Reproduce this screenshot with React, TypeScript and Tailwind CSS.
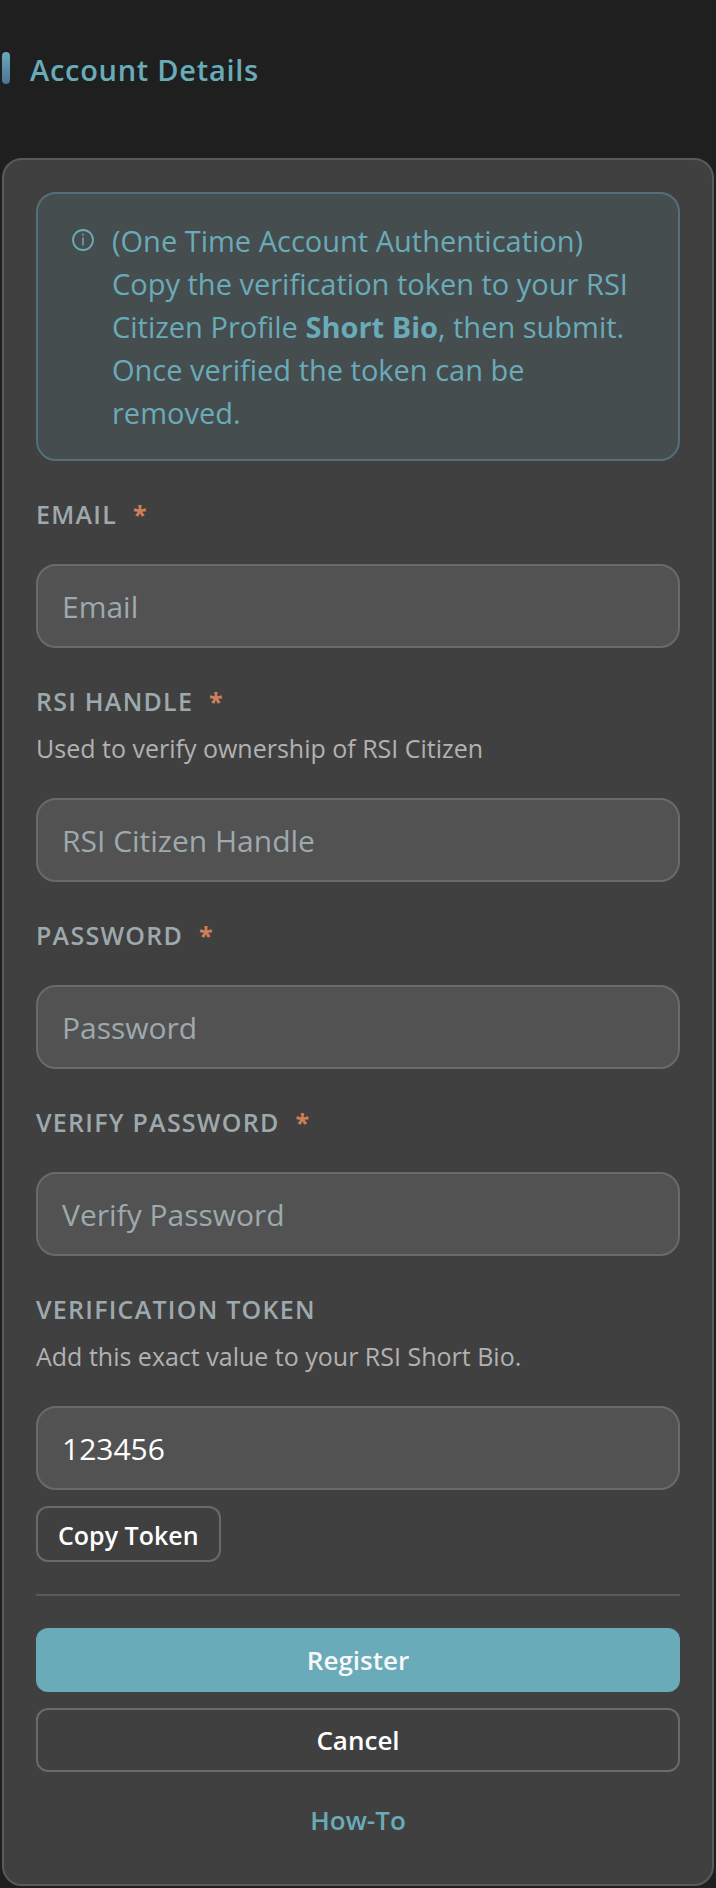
import React, { useState } from "react";

interface FieldProps {
  id: string;
  label: string;
  type?: string;
  placeholder?: string;
  hint?: string;
  required?: boolean;
  value: string;
  readOnly?: boolean;
  onChange?: (value: string) => void;
}

const InfoIcon = () => (
  <svg viewBox="0 0 26 26" className="w-[26px] h-[26px] shrink-0" fill="none" stroke="currentColor" aria-hidden="true">
    <circle cx="13" cy="12" r="10" strokeWidth="1.8" />
    <path d="M13 9.5v8" strokeWidth="1.5" />
    <path d="M13 5.8v1.8" strokeWidth="1.6" />
  </svg>
);

const Field: React.FC<FieldProps> = ({
  id,
  label,
  type = "text",
  placeholder,
  hint,
  required,
  value,
  readOnly,
  onChange,
}) => (
  <div className="flex flex-col">
    <label
      htmlFor={id}
      className="flex items-center gap-4 text-[25px] leading-[42px] font-semibold tracking-wider uppercase text-[#9ea9ad]"
    >
      {label}
      {required && <span className="font-bold text-[#cf8058]">*</span>}
    </label>
    {hint && (
      <p id={`${id}-hint`} className="mt-[5px] text-[25px] leading-[42px] text-[#b3b1b1]">
        {hint}
      </p>
    )}
    <input
      id={id}
      type={type}
      placeholder={placeholder}
      aria-describedby={hint ? `${id}-hint` : undefined}
      required={required}
      readOnly={readOnly}
      value={value}
      onChange={(e) => onChange?.(e.target.value)}
      className="mt-[29px] h-[84px] w-full rounded-[20px] border-2 border-[#6a6a6a] bg-[#525252] px-6 text-3xl text-white placeholder:text-[#9ea9ad] outline-none"
    />
  </div>
);

export default function App() {
  const [form, setForm] = useState({ email: "", handle: "", password: "", verify: "" });
  const token = "123456";

  const update = (key: keyof typeof form) => (value: string) =>
    setForm((prev) => ({ ...prev, [key]: value }));

  return (
    <main className="min-h-screen bg-[#1f1f1f] px-0.5 pb-0.5 font-['Open_Sans',sans-serif] text-white">
      <header className="flex items-start gap-5 pt-[52px] pb-[70px]">
        <span className="w-2 h-8 rounded bg-linear-to-b from-[#69abb9] to-[#4a7396]" />
        <h1 className="text-[29px] leading-9 font-semibold tracking-wide text-[#69abb9]">Account Details</h1>
      </header>

      <form
        className="flex flex-col rounded-[20px] border-2 border-[#5a5a5a] bg-[#404040] p-8"
        onSubmit={(e) => e.preventDefault()}
      >
        <div className="flex gap-4 rounded-[20px] border-2 border-[#53707a] bg-[#464d4e] px-8 py-[25px] text-[#69abb9]">
          <span className="flex h-[43px] items-center">
            <InfoIcon />
          </span>
          <p className="text-[29px] leading-[43px]">
            (One Time Account Authentication)
            <br />
            Copy the verification token to your RSI Citizen Profile <strong>Short Bio</strong>, then submit. Once
            verified the token can be removed.
          </p>
        </div>

        <div className="mt-8 flex flex-col gap-8">
          <Field
            id="email"
            label="Email"
            type="email"
            placeholder="Email"
            required
            value={form.email}
            onChange={update("email")}
          />
          <Field
            id="handle"
            label="RSI Handle"
            hint="Used to verify ownership of RSI Citizen"
            placeholder="RSI Citizen Handle"
            required
            value={form.handle}
            onChange={update("handle")}
          />
          <Field
            id="password"
            label="Password"
            type="password"
            placeholder="Password"
            required
            value={form.password}
            onChange={update("password")}
          />
          <Field
            id="verify"
            label="Verify Password"
            type="password"
            placeholder="Verify Password"
            required
            value={form.verify}
            onChange={update("verify")}
          />
          <Field
            id="token"
            label="Verification Token"
            hint="Add this exact value to your RSI Short Bio."
            value={token}
            readOnly
          />
        </div>

        <button
          type="button"
          onClick={() => navigator.clipboard?.writeText(token)}
          className="mt-4 h-14 self-start rounded-xl border-2 border-[#6a6a6a] px-5 pt-1 text-[25px] font-semibold"
        >
          Copy Token
        </button>

        <hr className="my-8 border-t-2 border-[#5a5a5a]" />

        <div className="flex flex-col gap-4 text-[26px] font-semibold">
          <button type="submit" className="h-16 rounded-xl bg-[#69abb9] text-[#f8f8f8]">
            Register
          </button>
          <button type="button" className="h-16 rounded-xl border-2 border-[#6a6a6a]">
            Cancel
          </button>
          <a href="#how-to" className="flex h-16 items-center justify-center text-[#69abb9]">
            How-To
          </a>
        </div>
      </form>
    </main>
  );
}
